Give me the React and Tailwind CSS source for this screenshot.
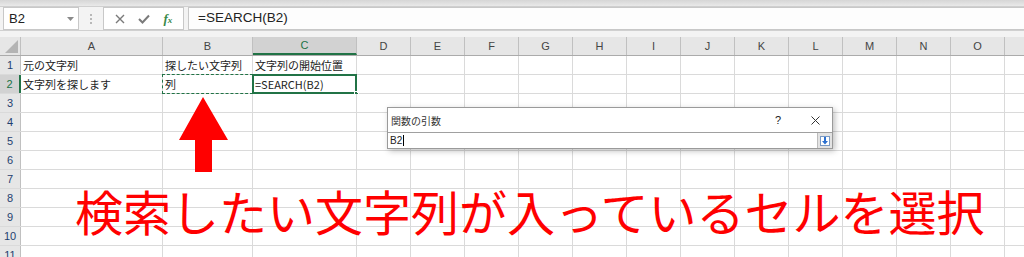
import React from "react";

const cols = [
  { name: "A", w: 142 },
  { name: "B", w: 90 },
  { name: "C", w: 104 },
  { name: "D", w: 54 },
  { name: "E", w: 54 },
  { name: "F", w: 54 },
  { name: "G", w: 54 },
  { name: "H", w: 54 },
  { name: "I", w: 54 },
  { name: "J", w: 54 },
  { name: "K", w: 54 },
  { name: "L", w: 54 },
  { name: "M", w: 54 },
  { name: "N", w: 54 },
  { name: "O", w: 54 },
  { name: "P", w: 54, hidden: true },
];

const cells = {
  "1A": "元の文字列",
  "1B": "探したい文字列",
  "1C": "文字列の開始位置",
  "2A": "文字列を探します",
  "2B": "列",
  "2C": "=SEARCH(B2)",
};

const jp = "font-['Yu_Gothic','Noto_Sans_CJK_JP',sans-serif]";

function FormulaBar() {
  return (
    <div className="h-[37px] bg-[#f3f3f3]">
      <div className="h-[7px] bg-gradient-to-b from-[#d6d6d6] to-[#e9e9e9] border-b border-[#cfcfcf]" />
      <div className="flex items-center h-[24px] border-b border-[#d0d0d0] bg-[#f3f3f3]">
        {/* name box */}
        <div className="ml-[3px] w-[76px] h-[23px] bg-white border border-[#c8c8c8] flex items-center justify-between pl-[5px] pr-[4px]">
          <span className="text-[13px] text-[#222] font-['Liberation_Sans',sans-serif]">B2</span>
          <svg width="7" height="4" viewBox="0 0 7 4">
            <path d="M0 0 L7 0 L3.5 4 Z" fill="#8a8a8a" />
          </svg>
        </div>
        <div className="w-[24px] flex flex-col items-center gap-[2px]">
          <span className="w-[2px] h-[2px] bg-[#b8b8b8]" />
          <span className="w-[2px] h-[2px] bg-[#b8b8b8]" />
          <span className="w-[2px] h-[2px] bg-[#b8b8b8]" />
        </div>
        {/* cancel / enter / fx */}
        <div className="w-[81px] h-[23px] bg-white border border-[#c8c8c8] flex items-center justify-around px-[4px]">
          <svg width="10" height="10" viewBox="0 0 10 10">
            <path d="M1 1 L9 9 M9 1 L1 9" stroke="#7a7a7a" strokeWidth="1.4" />
          </svg>
          <svg width="12" height="10" viewBox="0 0 12 10">
            <path d="M1 5 L4.5 8.5 L11 1.5" stroke="#7a7a7a" strokeWidth="2" fill="none" />
          </svg>
          <span className="text-[13px] italic font-bold text-[#3a8a4a] font-['Liberation_Serif',serif]">
            f<span className="text-[9px]">x</span>
          </span>
        </div>
        <div className="ml-[4px] flex-1 h-[23px] bg-[#fdfdfd] border border-[#c8c8c8] border-r-0 flex items-center pl-[9px]">
          <span className="text-[13.5px] text-[#222] font-['Liberation_Sans',sans-serif]">=SEARCH(B2)</span>
        </div>
      </div>
    </div>
  );
}

function HeaderRow() {
  return (
    <div className="flex h-[19px] bg-[#e6e6e6] border-b border-[#ababab]">
      <div className="relative w-[21px] shrink-0 border-r border-[#c0c0c0]">
        <svg className="absolute right-[2px] bottom-[2px]" width="13" height="13" viewBox="0 0 13 13">
          <path d="M13 0 L13 13 L0 13 Z" fill="#b4b4b4" />
        </svg>
      </div>
      {cols.map((c) => (
        <div
          key={c.name}
          style={{ width: c.w }}
          className={
            "shrink-0 flex items-center justify-center text-[11px] font-['Liberation_Sans',sans-serif] border-r " +
            (c.name === "C"
              ? "bg-[#d2d2d2] text-[#217346] border-[#c0c0c0] border-b-2 border-b-[#217346]"
              : "text-[#444] border-[#c0c0c0]")
          }
        >
          {c.hidden ? "" : c.name}
        </div>
      ))}
    </div>
  );
}

function Row({ n }) {
  const sel = n === 2;
  return (
    <div className="flex h-[19px] border-b border-[#dadada]">
      <div
        className={
          "w-[21px] shrink-0 flex items-center justify-center text-[11px] font-['Liberation_Sans',sans-serif] " +
          (sel
            ? "bg-[#d2d2d2] text-[#217346] border-r-2 border-[#217346]"
            : "bg-[#e6e6e6] text-[#1f3f6f] border-r border-[#c0c0c0]")
        }
      >
        {n}
      </div>
      {cols.map((c) => {
        const key = `${n}${c.name}`;
        const text = cells[key];
        const isB2 = key === "2B";
        const isC2 = key === "2C";
        return (
          <div
            key={c.name}
            style={{ width: c.w }}
            className="relative shrink-0 border-r border-[#dadada] bg-white"
          >
            {text && (
              <span
                className={
                  "absolute left-[2px] top-0 leading-[18px] whitespace-nowrap text-[11px] text-[#222] " + jp
                }
              >
                {text}
              </span>
            )}
            {isB2 && (
              <div className="absolute -left-[1px] -top-[1px] -right-[1px] -bottom-[1px] border border-dashed border-[#217346]" />
            )}
            {isC2 && (
              <>
                <div className="absolute -left-[1px] -top-[1px] -right-[1px] -bottom-[1px] border-2 border-[#217346]" />
                <div className="absolute -right-[3px] -bottom-[3px] w-[5px] h-[5px] bg-[#217346] border border-white" />
              </>
            )}
          </div>
        );
      })}
    </div>
  );
}

function Dialog() {
  return (
    <div className="absolute left-[387px] top-[107px] w-[446px] h-[42px] bg-white border border-[#9a9a9a] shadow-[2px_2px_6px_rgba(0,0,0,0.25)]">
      <div className="flex items-center h-[24px] pl-[3px]">
        <span className={"text-[10px] text-[#333] " + jp}>関数の引数</span>
        <span className="ml-auto mr-[30px] text-[11px] text-[#222] font-['Liberation_Sans',sans-serif]">?</span>
        <svg className="mr-[12px]" width="9" height="9" viewBox="0 0 9 9">
          <path d="M0.5 0.5 L8.5 8.5 M8.5 0.5 L0.5 8.5" stroke="#333" strokeWidth="1" />
        </svg>
      </div>
      <div className="flex items-center h-[16px] border-t border-[#a0a0a0] bg-white">
        <span className="pl-[2px] text-[10px] text-[#222] font-['Liberation_Sans',sans-serif]">B2</span>
        <span className="ml-[1px] w-[1px] h-[11px] bg-black" />
        <div className="ml-auto w-[15px] h-[15px] bg-[#e3e3e3] border-l border-[#bcbcbc] flex items-center justify-center">
          <div className="w-[10px] h-[10px] border border-[#7a9ac4] bg-white flex items-center justify-center">
            <svg width="8" height="8" viewBox="0 0 8 8">
              <path d="M3 0 L5 0 L5 4 L7 4 L4 7.5 L1 4 L3 4 Z" fill="#2a6fd0" />
            </svg>
          </div>
        </div>
      </div>
    </div>
  );
}

export default function App() {
  return (
    <div className="relative w-[1024px] h-[257px] overflow-hidden bg-white">
      <FormulaBar />
      <div className="w-[1024px] overflow-hidden">
        <div className="w-max">
          <HeaderRow />
          {[1, 2, 3, 4, 5, 6, 7, 8, 9, 10, 11].map((n) => (
            <Row key={n} n={n} />
          ))}
        </div>
      </div>

      {/* red arrow pointing at B2 */}
      <svg className="absolute left-0 top-0" width="1024" height="257" viewBox="0 0 1024 257">
        <path d="M203 97 L228 140 L212 140 L212 172 L195 172 L195 140 L179 140 Z" fill="#ff0000" />
      </svg>

      <Dialog />

      <div
        className={
          "absolute left-[75px] top-[186px] text-[48px] leading-none whitespace-nowrap text-[#ff0000] " + jp
        }
      >
        検索したい文字列が入っているセルを選択
      </div>
    </div>
  );
}
